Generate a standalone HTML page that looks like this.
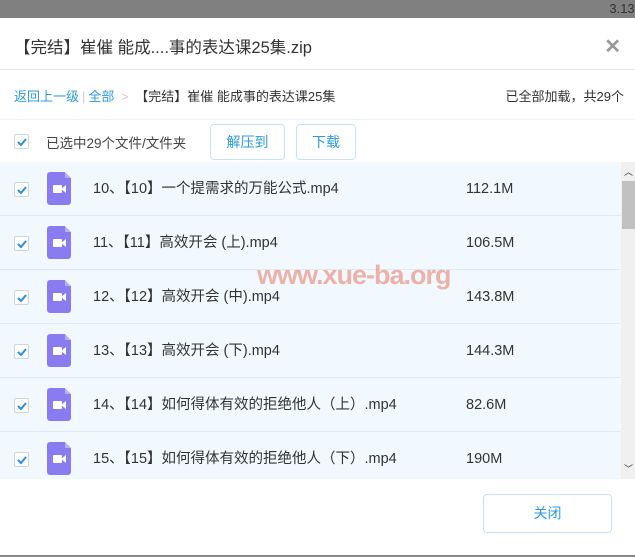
<!DOCTYPE html>
<html><head><meta charset="utf-8"><style>
*{margin:0;padding:0;box-sizing:border-box}
body{width:635px;height:557px;overflow:hidden;background:#fff;font-family:"Liberation Sans","Noto Sans CJK SC",sans-serif;color:#333;position:relative}
.top{position:absolute;left:0;top:0;width:635px;height:18px;background:#808080;color:#333;font-size:13px}
.top span{position:absolute;right:-4px;top:1px}
.title{position:absolute;left:14px;top:34px;font-size:16.5px;color:#333}
.x{position:absolute;right:14px;top:34px;font-size:20px;color:#999;font-weight:bold}
.l1{position:absolute;left:0;top:69px;width:635px;height:1px;background:#dfe4ea}
.bc{position:absolute;left:14px;top:86px;font-size:13px;color:#333}
.bc a{color:#2a9be0}
.bc .s{color:#ccc;margin:0 3px}
.cnt{position:absolute;right:11px;top:86px;font-size:13px;color:#333}
.l2{position:absolute;left:0;top:119px;width:635px;height:1px;background:#eef1f4}
.cb{position:absolute;width:15px;height:15px;border:1px solid #ccd5de;background:#fff;border-radius:2px}
.cb svg{position:absolute;left:1px;top:1px}
.sel{position:absolute;left:46px;top:132px;font-size:13.5px;color:#444}
.btn{position:absolute;top:124px;height:36px;border:1px solid #c5e3f6;border-radius:4px;color:#2a9be0;font-size:14px;text-align:center;line-height:34px}
.list{position:absolute;left:0;top:162px;width:621px;height:317px;background:#f2f9fe;overflow:hidden}
.row{position:absolute;left:0;width:621px;height:54px;border-bottom:1px solid #dfe9f1}
.row .cb{left:14px;top:20px}
.ic{position:absolute;left:47px;top:10px;width:24px;height:33px;background:#8a7cf0;border-radius:3px}
.ic:before{content:"";position:absolute;right:0;top:0;border-left:6px solid #b8aff7;border-top:6px solid #f2f9fe}
.ic i{position:absolute;left:6px;top:13px;width:9px;height:8px;background:#fff;border-radius:1px}
.ic b{position:absolute;left:14px;top:13px;border-right:5px solid #fff;border-top:4px solid transparent;border-bottom:4px solid transparent;height:0}
.nm{position:absolute;left:93px;top:0;line-height:54px;font-size:14.5px;color:#333}
.sz{position:absolute;left:466px;top:0;line-height:54px;font-size:14.5px;color:#333}
.sb{position:absolute;left:621px;top:162px;width:14px;height:317px;background:#f0f0f0}
.th{position:absolute;left:622px;top:181px;width:13px;height:48px;background:#c1c1c1}
.close{position:absolute;left:483px;top:494px;width:129px;height:39px;border:1px solid #c5e3f6;border-radius:4px;color:#2a9be0;font-size:14px;text-align:center;line-height:37px}
.bl{position:absolute;left:0;top:555px;width:635px;height:2px;background:#888}
.wm{position:absolute;left:257px;top:260px;font-size:27px;font-weight:bold;color:rgba(232,120,100,.55);letter-spacing:-1px}
</style></head><body>
<div class="top"><span>3.13(</span></div>
<div class="title">【完结】崔催 能成....事的表达课25集.zip</div>
<div class="x">✕</div>
<div class="l1"></div>
<div class="bc"><a>返回上一级</a><span class="s">|</span><a>全部</a><span class="s"> &gt; </span>【完结】崔催 能成事的表达课25集</div>
<div class="cnt">已全部加载，共29个</div>
<div class="l2"></div>
<div class="cb" style="left:14px;top:134px"><svg width="12" height="12"><path d="M2 6 L5 9 L10 3" stroke="#2a8fe0" stroke-width="2" fill="none"/></svg></div>
<div class="sel">已选中29个文件/文件夹</div>
<div class="btn" style="left:210px;width:75px">解压到</div>
<div class="btn" style="left:296px;width:60px">下载</div>
<div class="list">
<div class="row" style="top:0"><div class="cb"><svg width="12" height="12"><path d="M2 6 L5 9 L10 3" stroke="#2a8fe0" stroke-width="2" fill="none"/></svg></div><div class="ic"><i></i><b></b></div><div class="nm">10、【10】一个提需求的万能公式.mp4</div><div class="sz">112.1M</div></div>
<div class="row" style="top:54px"><div class="cb"><svg width="12" height="12"><path d="M2 6 L5 9 L10 3" stroke="#2a8fe0" stroke-width="2" fill="none"/></svg></div><div class="ic"><i></i><b></b></div><div class="nm">11、【11】高效开会 (上).mp4</div><div class="sz">106.5M</div></div>
<div class="row" style="top:108px"><div class="cb"><svg width="12" height="12"><path d="M2 6 L5 9 L10 3" stroke="#2a8fe0" stroke-width="2" fill="none"/></svg></div><div class="ic"><i></i><b></b></div><div class="nm">12、【12】高效开会 (中).mp4</div><div class="sz">143.8M</div></div>
<div class="row" style="top:162px"><div class="cb"><svg width="12" height="12"><path d="M2 6 L5 9 L10 3" stroke="#2a8fe0" stroke-width="2" fill="none"/></svg></div><div class="ic"><i></i><b></b></div><div class="nm">13、【13】高效开会 (下).mp4</div><div class="sz">144.3M</div></div>
<div class="row" style="top:216px"><div class="cb"><svg width="12" height="12"><path d="M2 6 L5 9 L10 3" stroke="#2a8fe0" stroke-width="2" fill="none"/></svg></div><div class="ic"><i></i><b></b></div><div class="nm">14、【14】如何得体有效的拒绝他人（上）.mp4</div><div class="sz">82.6M</div></div>
<div class="row" style="top:270px"><div class="cb"><svg width="12" height="12"><path d="M2 6 L5 9 L10 3" stroke="#2a8fe0" stroke-width="2" fill="none"/></svg></div><div class="ic"><i></i><b></b></div><div class="nm">15、【15】如何得体有效的拒绝他人（下）.mp4</div><div class="sz">190M</div></div>
</div>
<div class="wm">www.xue-ba.org</div>
<div class="sb"></div><div class="th"></div>
<div style="position:absolute;left:624px;top:165px;font-size:9px;color:#333">︿</div>
<div style="position:absolute;left:624px;top:462px;font-size:9px;color:#333">﹀</div>
<div class="close">关闭</div>
<div class="bl"></div>
</body></html>
